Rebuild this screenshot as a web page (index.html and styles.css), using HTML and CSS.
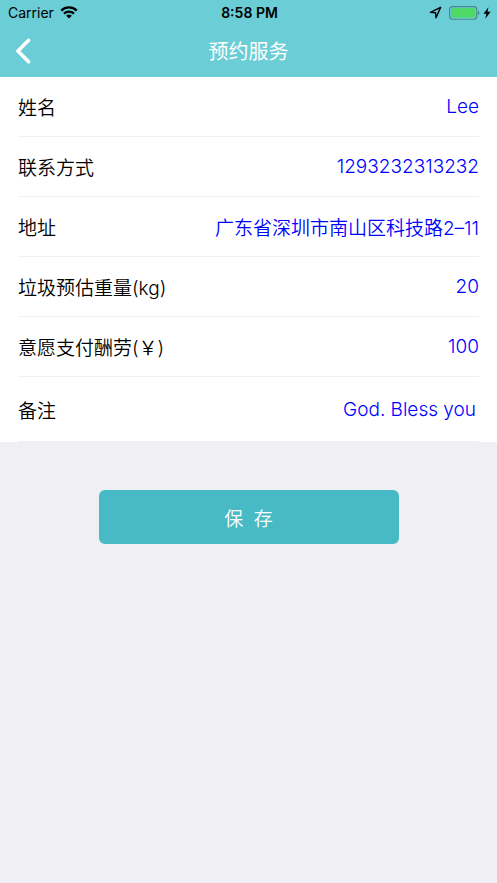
FILE: index.html
```html
<!DOCTYPE html>
<html lang="zh-CN">
<head>
<meta charset="utf-8">
<meta name="viewport" content="width=device-width, initial-scale=1">
<title>预约服务</title>
<link rel="stylesheet" href="styles.css">
</head>
<body>
<header class="header">
  <div class="status">
    <div class="status-left">
      <span>Carrier</span>
      <svg width="18" height="13" viewBox="0 0 18 13" fill="none" stroke="#000" stroke-width="2.3" aria-hidden="true">
        <path d="M1.2 4.6a11.2 11.2 0 0 1 15.6 0"/>
        <path d="M4 7.7a7.2 7.2 0 0 1 10 0"/>
        <path d="M9 12.6 6.2 9.8a4 4 0 0 1 5.6 0z" fill="#000" stroke="none"/>
      </svg>
    </div>
    <span class="clock">8:58 PM</span>
    <div class="status-right">
      <svg class="location" width="13" height="13" viewBox="0 0 13 13" fill="none" stroke="#000" stroke-width="1.4" stroke-linejoin="round" aria-hidden="true">
        <path d="M11.6 1.4 1.5 6.4l5 .4.5 5z"/>
      </svg>
      <svg class="battery" width="31" height="14" viewBox="0 0 31 14" aria-hidden="true">
        <rect x=".6" y=".6" width="27.2" height="12.6" rx="3" fill="none" stroke="#47868b" stroke-width="1.1"/>
        <rect x="2.2" y="2.2" width="24" height="9.4" rx="1.4" fill="#4cd964"/>
        <path d="M29 4.8v4.4c1.8-.6 1.8-3.8 0-4.4z" fill="#47868b"/>
      </svg>
      <svg width="8" height="12" viewBox="0 0 8 12" aria-hidden="true">
        <path d="M5.4.2.5 6.8h2.9L2.3 11.8 7.6 4.8H4.5z"/>
      </svg>
    </div>
  </div>
  <nav class="nav">
    <button class="back" type="button" aria-label="返回">
      <svg width="16" height="26" viewBox="0 0 16 26" fill="none" stroke="#fff" stroke-width="3.6" stroke-linecap="round" stroke-linejoin="round" aria-hidden="true">
        <path d="M12.6 2.2 1.9 13l10.7 10.8"/>
      </svg>
    </button>
    <h1 class="title">预约服务</h1>
  </nav>
</header>
<form class="form">
  <div class="fields">
    <div class="row">
      <label for="name">姓名</label>
      <input id="name" type="text" value="Lee">
    </div>
    <div class="row">
      <label for="phone">联系方式</label>
      <input id="phone" type="tel" value="1293232313232">
    </div>
    <div class="row">
      <label for="address">地址</label>
      <input id="address" type="text" value="广东省深圳市南山区科技路2–11">
    </div>
    <div class="row">
      <label for="weight">垃圾预估重量(kg)</label>
      <input id="weight" type="text" value="20">
    </div>
    <div class="row">
      <label for="pay">意愿支付酬劳(￥)</label>
      <input id="pay" type="text" value="100">
    </div>
    <div class="row row-note">
      <label for="note">备注</label>
      <input id="note" type="text" value="God. Bless you">
    </div>
  </div>
  <button class="save" type="button">保&nbsp; 存</button>
</form>
</body>
</html>
```
FILE: styles.css
```css
* {
  box-sizing: border-box;
}

body {
  margin: 0;
  min-height: 100vh;
  background: #efeff4;
  color: #000;
  font-family: Inter, "Noto Sans CJK SC", sans-serif;
  font-size: 19px;
  font-weight: 350;
}

button,
input {
  border: 0;
  padding: 0;
  background: none;
  font: inherit;
}

.header {
  padding-bottom: 1px;
  background: #6bcdd5;
}

.status {
  display: grid;
  grid-template-columns: 1fr auto 1fr;
  align-items: center;
  height: 25px;
  padding: 0 6px 0 8px;
  font-size: 14px;
  font-weight: 400;
}

.status-left,
.status-right {
  display: flex;
  align-items: center;
}

.status-left {
  gap: 6px;
}

.status-right {
  justify-content: flex-end;
}

.location {
  margin-right: 7px;
}

.battery {
  margin-right: 3px;
}

.clock {
  font-weight: 600;
}

.nav {
  display: grid;
  grid-template-columns: 1fr auto 1fr;
  align-items: center;
  height: 51px;
  padding: 0 16px;
}

.back {
  display: flex;
  justify-self: start;
}

.title {
  margin: 0;
  color: #fff;
  font-size: 20px;
  font-weight: 400;
}

.fields {
  background: #fff;
}

.row {
  display: flex;
  align-items: center;
  height: 60px;
  margin: 0 18px;
  border-bottom: 1px solid #efeff4;
}

.row input {
  flex: 1;
  min-width: 0;
  color: #00f;
  text-align: right;
}

.row-note {
  height: 65px;
}

.row-note input {
  padding-right: 3px;
}

.save {
  display: block;
  width: calc(100% - 197px);
  height: 54px;
  margin: 48px auto 0;
  border-radius: 6px;
  background: #47bac5;
  color: #fff;
}
```
